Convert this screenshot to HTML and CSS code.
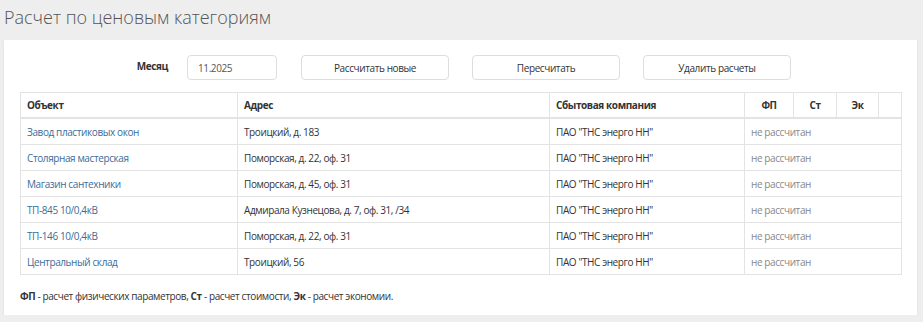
FILE: index.html
```html
<!DOCTYPE html>
<html lang="ru">
<head>
  <meta charset="UTF-8">
  <title>Расчет по ценовым категориям</title>
  <link rel="stylesheet" href="styles.css">
</head>
<body>
  <h1 class="page-title">Расчет по ценовым категориям</h1>

  <section class="panel">
    <div class="controls">
      <label class="month-label" for="month">Месяц</label>
      <input class="month-input" id="month" type="text" value="11.2025">
      <button class="btn">Рассчитать новые</button>
      <button class="btn">Пересчитать</button>
      <button class="btn">Удалить расчеты</button>
    </div>

    <table class="calc-table">
      <colgroup>
        <col style="width:217px">
        <col style="width:312px">
        <col style="width:195px">
        <col style="width:49px">
        <col style="width:43px">
        <col style="width:42px">
        <col>
      </colgroup>
      <thead>
        <tr>
          <th>Объект</th>
          <th>Адрес</th>
          <th>Сбытовая компания</th>
          <th class="center">ФП</th>
          <th class="center">Ст</th>
          <th class="center">Эк</th>
          <th></th>
        </tr>
      </thead>
      <tbody>
        <tr>
          <td><a href="#">Завод пластиковых окон</a></td>
          <td>Троицкий, д. 183</td>
          <td>ПАО "ТНС энерго НН"</td>
          <td class="status" colspan="4">не рассчитан</td>
        </tr>
        <tr>
          <td><a href="#">Столярная мастерская</a></td>
          <td>Поморская, д. 22, оф. 31</td>
          <td>ПАО "ТНС энерго НН"</td>
          <td class="status" colspan="4">не рассчитан</td>
        </tr>
        <tr>
          <td><a href="#">Магазин сантехники</a></td>
          <td>Поморская, д. 45, оф. 31</td>
          <td>ПАО "ТНС энерго НН"</td>
          <td class="status" colspan="4">не рассчитан</td>
        </tr>
        <tr>
          <td><a href="#">ТП-845 10/0,4кВ</a></td>
          <td>Адмирала Кузнецова, д. 7, оф. 31, /34</td>
          <td>ПАО "ТНС энерго НН"</td>
          <td class="status" colspan="4">не рассчитан</td>
        </tr>
        <tr>
          <td><a href="#">ТП-146 10/0,4кВ</a></td>
          <td>Поморская, д. 22, оф. 31</td>
          <td>ПАО "ТНС энерго НН"</td>
          <td class="status" colspan="4">не рассчитан</td>
        </tr>
        <tr>
          <td><a href="#">Центральный склад</a></td>
          <td>Троицкий, 56</td>
          <td>ПАО "ТНС энерго НН"</td>
          <td class="status" colspan="4">не рассчитан</td>
        </tr>
      </tbody>
    </table>

    <p class="legend"><b>ФП</b> - расчет физических параметров, <b>Ст</b> - расчет стоимости, <b>Эк</b> - расчет экономии.</p>
  </section>
</body>
</html>
```

FILE: styles.css
```css
body {
  margin: 0;
  background-color: #eeeeee;
  font-family: "Open Sans", "Noto Sans", sans-serif;
  font-size: 10px;
  letter-spacing: -0.4px;
  color: #333;
}

.page-title {
  margin: 0;
  padding: 3px 4px 0;
  height: 37px;
  font-size: 18px;
  font-weight: 300;
  letter-spacing: 0;
  color: #555;
  line-height: 28px;
}

.panel {
  margin: 0 6px 0 4px;
  background-color: #fff;
  padding: 15px 15px 11px 16px;
  box-shadow: 0 1px 2px rgba(0, 0, 0, 0.08);
}

/* top form row */
.controls {
  display: flex;
  align-items: center;
  height: 25px;
  margin-bottom: 12px;
}

.month-label {
  font-weight: bold;
  margin-left: 100px;
  margin-right: 19px;
  width: 48px;
  text-align: right;
  position: relative;
  top: -2px;
}

.month-input {
  box-sizing: border-box;
  width: 90px;
  height: 25px;
  padding: 0 10px;
  border: 1px solid #ddd;
  border-radius: 4px;
  font-family: inherit;
  font-size: 10px;
  letter-spacing: -0.4px;
  color: #555;
  margin-right: 24px;
}

.btn {
  box-sizing: border-box;
  width: 148px;
  height: 25px;
  margin-right: 23px;
  background-color: #fff;
  border: 1px solid #ddd;
  border-radius: 4px;
  font-family: inherit;
  font-size: 10px;
  letter-spacing: -0.4px;
  color: #333;
  cursor: pointer;
}

/* table */
.calc-table {
  width: 882px;
  table-layout: fixed;
  border-collapse: collapse;
}

.calc-table th,
.calc-table td {
  border: 1px solid #e3e3e3;
  padding: 0 6px;
  height: 25px;
  text-align: left;
  white-space: nowrap;
  overflow: hidden;
}

.calc-table th {
  height: 24px;
  font-weight: bold;
  border-bottom: 2px solid #e3e3e3;
}

.calc-table th.center {
  text-align: center;
}

.calc-table a {
  color: #3a6d99;
  text-decoration: none;
}

.calc-table td.status {
  color: #888;
}

.legend {
  margin: 14px 0 0;
  line-height: 15px;
}
```
